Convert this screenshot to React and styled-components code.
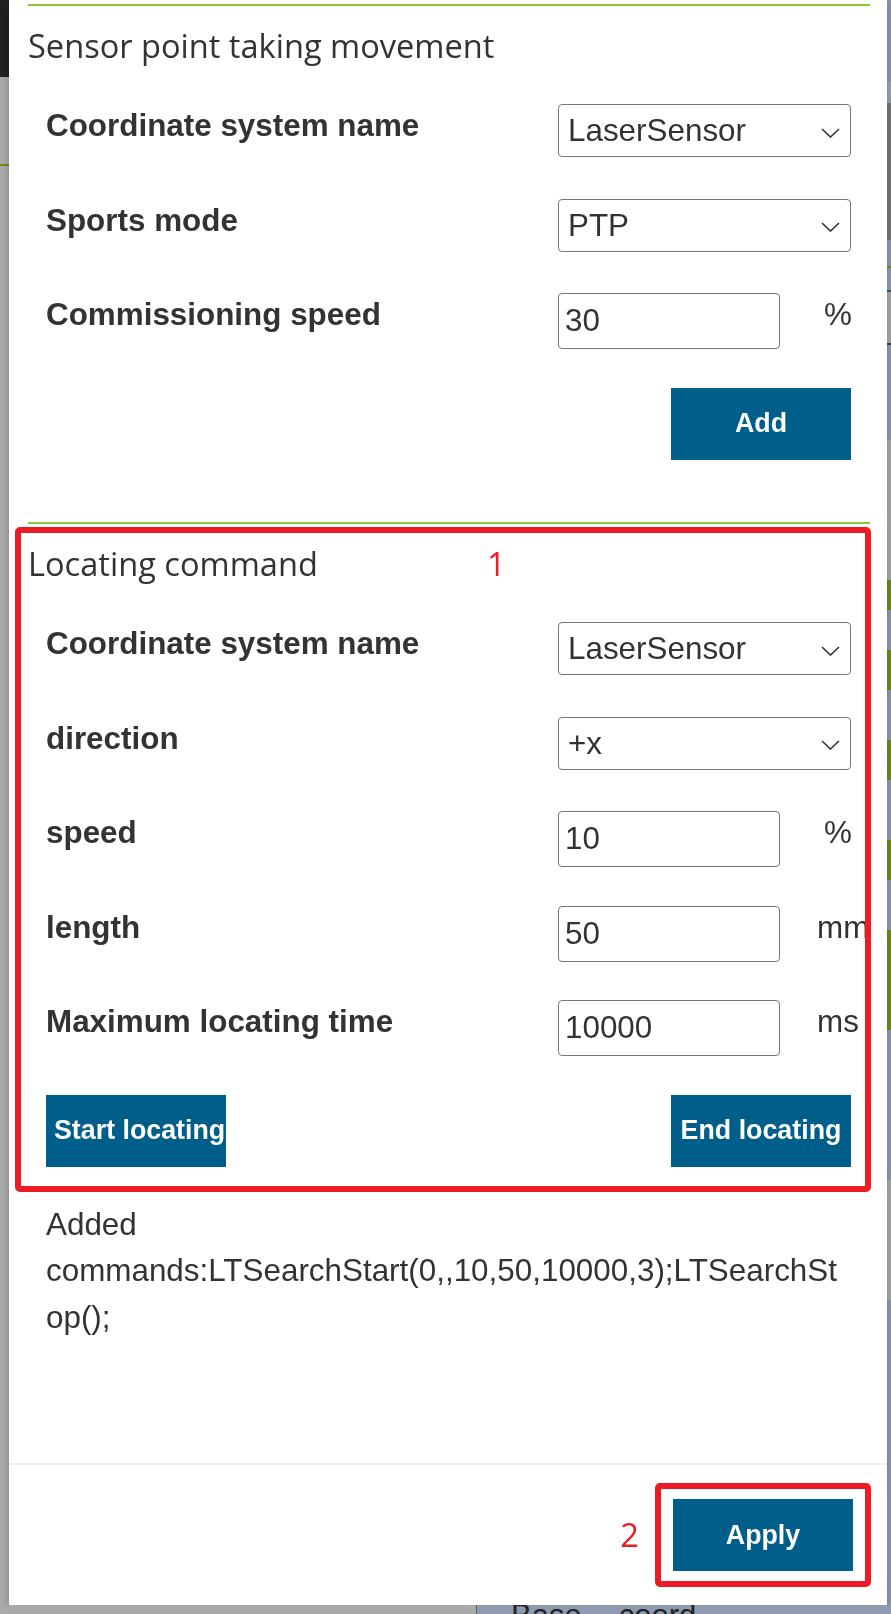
import React from "react";
import styled, { createGlobalStyle } from "styled-components";

const BLUE = "#005e8a";
const RED = "#ed1c24";
const GREEN = "#8dc43e";
const TEXT = "#333333";

const GlobalStyle = createGlobalStyle`
  html, body { margin: 0; padding: 0; }
  body {
    background: #a9a9a9;
    font-family: "Liberation Sans", Arial, sans-serif;
    color: ${TEXT};
    overflow: hidden;
  }
  * { box-sizing: border-box; }
`;

/* ---------- dimmed page behind the dialog ---------- */
const Backdrop = styled.div`
  position: fixed;
  inset: 0;
  display: grid;
  grid-template-columns: 9px 1fr 4px;
  background: #a9a9a9;
`;

const LeftRail = styled.div`
  background: linear-gradient(
    to bottom,
    #222 0 77px,
    #aaa 77px 164px,
    #6b8e23 164px 166px,
    #aaa 166px
  );
`;

const RightRail = styled.div`
  background: linear-gradient(
    to bottom,
    #8b99b4 0 82px,
    #9aa5ba 82px 103px,
    #777 103px 240px,
    #8f9cb6 240px 266px,
    #6d8f2a 266px 268px,
    #909db5 268px 290px,
    #555 290px 292px,
    #aaa 292px 343px,
    #444 343px 345px,
    #8e9ab2 345px 440px,
    #aaa 440px 580px,
    #6b8e23 580px 610px,
    #8e9ab2 610px 650px,
    #6b8e23 650px 690px,
    #8e9ab2 690px 740px,
    #6b8e23 740px 780px,
    #8e9ab2 780px 840px,
    #6b8e23 840px 880px,
    #8e9ab2 880px 930px,
    #6b8e23 930px 1030px,
    #8e9ab2 1030px 1180px,
    #aaa 1180px 1300px,
    #8e9ab2 1300px
  );
`;

const BackdropMain = styled.div`
  display: flex;
  flex-direction: column;
  justify-content: flex-end;
`;

const BottomBar = styled.div`
  height: 9px;
  display: grid;
  grid-template-columns: 467px 1fr;
`;

const BasePanel = styled.div`
  background: #8f9ab1;
  border-left: 1px solid #5f5f5f;
  overflow: hidden;
  padding-left: 34px;
`;

const BaseText = styled.div`
  display: flex;
  gap: 37px;
  margin-top: -7px;
  font-size: 31px;
  line-height: 36px;
  color: #222;
`;

/* ---------- dialog ---------- */
const Dialog = styled.section`
  position: relative;
  z-index: 1;
  margin-left: 9px;
  width: 878px;
  height: 1605px;
  background: #fff;
  display: flex;
  flex-direction: column;
  box-shadow: 0 2px 8px rgba(0, 0, 0, 0.25);
`;

const Body = styled.div`
  flex: 1;
  padding: 4px 17px 0 19px;
`;

const Section = styled.div`
  position: relative;
  border-top: 2px solid ${GREEN};
  padding-bottom: ${(p) => p.$pb || 0}px;
`;

const SectionTitle = styled.h2`
  margin: 17.5px 0 36.5px;
  font-family: "Open Sans", sans-serif;
  font-weight: 400;
  font-size: 32.6px;
  line-height: 44px;
  color: ${TEXT};
`;

const Fields = styled.div`
  padding: 0 19px 0 18px;
`;

const FieldRow = styled.div`
  display: grid;
  grid-template-columns: 1fr 222px 71px;
  align-items: start;
  height: 94.5px;
`;

const Label = styled.div`
  font-weight: 700;
  font-size: 31.4px;
  line-height: 36px;
  padding-top: 4px;
  white-space: nowrap;
`;

const SelectWrap = styled.div`
  grid-column: 2 / 4;
  position: relative;
  height: 53px;
`;

const Select = styled.select`
  appearance: none;
  -webkit-appearance: none;
  width: 100%;
  height: 100%;
  border: 1.5px solid #767676;
  border-radius: 4px;
  background: #fff;
  font: 400 31.4px "Liberation Sans", Arial, sans-serif;
  color: ${TEXT};
  padding: 0 40px 0 9px;
  outline: none;
`;

const Chevron = styled.svg`
  position: absolute;
  right: 11px;
  top: calc(50% - 3px);
  pointer-events: none;
`;

const Input = styled.input`
  width: 222px;
  height: 56px;
  border: 1.5px solid #767676;
  border-radius: 4px;
  background: #fff;
  font: 400 31.4px "Liberation Sans", Arial, sans-serif;
  color: ${TEXT};
  padding: 0 6px;
  outline: none;
`;

const Unit = styled.div`
  width: 42px;
  margin-left: 37px;
  text-align: center;
  font-size: 31.4px;
  line-height: 36px;
  padding-top: 4px;
  white-space: nowrap;
`;

const ButtonRow = styled.div`
  display: flex;
  justify-content: ${(p) => p.$justify || "flex-end"};
`;

const Button = styled.button`
  width: 180px;
  height: 72px;
  border: 0;
  border-radius: 0;
  background: ${BLUE};
  color: #fff;
  font: 700 26.8px "Liberation Sans", Arial, sans-serif;
  padding: 0 8px;
  white-space: nowrap;
  overflow: hidden;
  text-align: center;
  cursor: pointer;
`;

const CommandText = styled.p`
  margin: 35px 0 0;
  padding: 0 20px 0 18px;
  font-size: 31.4px;
  line-height: 46.5px;
  overflow-wrap: break-word;
  color: ${TEXT};
`;

const Footer = styled.footer`
  height: 142px;
  border-top: 2px solid #eeeeee;
  display: flex;
  align-items: center;
  justify-content: flex-end;
  padding-right: 34px;
`;

/* ---------- red annotations drawn over the screenshot ---------- */
const Highlight = styled.div`
  position: absolute;
  left: -13px;
  top: 3px;
  width: 856px;
  height: 665px;
  border: 6px solid ${RED};
  border-radius: 5px;
  pointer-events: none;
`;

const Annotated = styled.div`
  position: relative;
  &::after {
    content: "";
    position: absolute;
    inset: -16px -18px;
    border: 6px solid ${RED};
    border-radius: 5px;
    pointer-events: none;
  }
`;

const StepNumber = styled.span`
  position: absolute;
  font-family: "Open Sans", sans-serif;
  font-size: 32.6px;
  line-height: 44px;
  color: ${RED};
  left: ${(p) => p.$left};
  right: ${(p) => p.$right};
  top: ${(p) => p.$top};
  transform: ${(p) => (p.$center ? "translateY(-50%)" : "none")};
`;

function ChevronIcon() {
  return (
    <Chevron width="19" height="10" viewBox="0 0 19 10">
      <path d="M1 1 L9.5 9 L18 1" fill="none" stroke="#333" strokeWidth="1.6" />
    </Chevron>
  );
}

function SelectField({ label, value, options }) {
  return (
    <FieldRow>
      <Label>{label}</Label>
      <SelectWrap>
        <Select defaultValue={value}>
          {options.map((o) => (
            <option key={o}>{o}</option>
          ))}
        </Select>
        <ChevronIcon />
      </SelectWrap>
    </FieldRow>
  );
}

function InputField({ label, value, unit }) {
  return (
    <FieldRow>
      <Label>{label}</Label>
      <Input defaultValue={value} />
      <Unit>{unit}</Unit>
    </FieldRow>
  );
}

export default function App() {
  return (
    <>
      <GlobalStyle />
      <Backdrop aria-hidden="true">
        <LeftRail />
        <BackdropMain>
          <BottomBar>
            <div />
            <BasePanel>
              <BaseText>
                <span>Base</span>
                <span>coord</span>
              </BaseText>
            </BasePanel>
          </BottomBar>
        </BackdropMain>
        <RightRail />
      </Backdrop>

      <Dialog>
        <Body>
          <Section $pb={62.5}>
            <SectionTitle>Sensor point taking movement</SectionTitle>
            <Fields>
              <SelectField
                label="Coordinate system name"
                value="LaserSensor"
                options={["LaserSensor", "Base", "Tool"]}
              />
              <SelectField label="Sports mode" value="PTP" options={["PTP", "LIN"]} />
              <InputField label="Commissioning speed" value="30" unit="%" />
              <ButtonRow>
                <Button>Add</Button>
              </ButtonRow>
            </Fields>
          </Section>

          <Section>
            <SectionTitle>Locating command</SectionTitle>
            <Fields>
              <SelectField
                label="Coordinate system name"
                value="LaserSensor"
                options={["LaserSensor", "Base", "Tool"]}
              />
              <SelectField
                label="direction"
                value="+x"
                options={["+x", "-x", "+y", "-y", "+z", "-z"]}
              />
              <InputField label="speed" value="10" unit="%" />
              <InputField label="length" value="50" unit="mm" />
              <InputField label="Maximum locating time" value="10000" unit="ms" />
              <ButtonRow $justify="space-between">
                <Button>Start locating</Button>
                <Button>End locating</Button>
              </ButtonRow>
            </Fields>
            <Highlight />
            <StepNumber $left="459px" $top="17.5px">1</StepNumber>
          </Section>

          <CommandText>
            Added commands:LTSearchStart(0,,10,50,10000,3);LTSearchStop();
          </CommandText>
        </Body>

        <Footer>
          <Annotated>
            <StepNumber $right="calc(100% + 34px)" $top="50%" $center>
              2
            </StepNumber>
            <Button>Apply</Button>
          </Annotated>
        </Footer>
      </Dialog>
    </>
  );
}
